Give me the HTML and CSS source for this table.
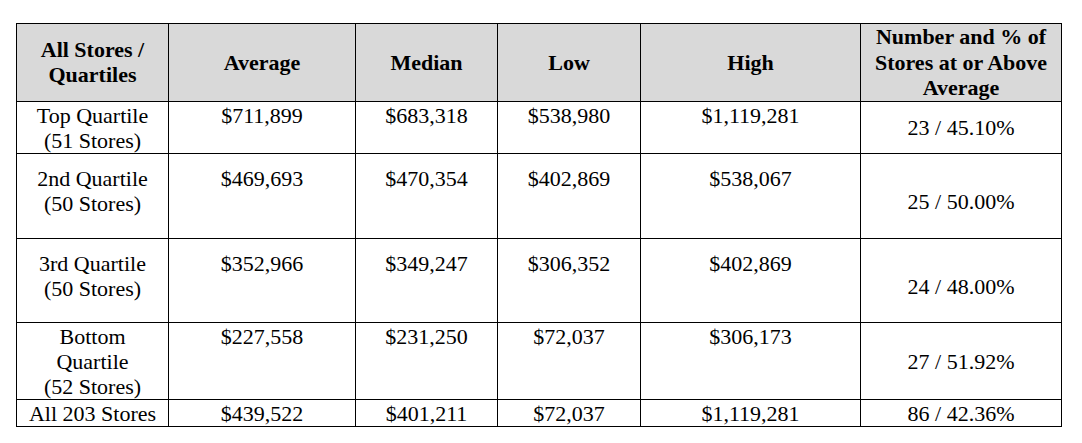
FILE: index.html
```html
<!DOCTYPE html>
<html>
<head>
<meta charset="utf-8">
<link rel="stylesheet" href="styles.css">
</head>
<body>
<table class="stats">
  <colgroup>
    <col class="c1"><col class="c2"><col class="c3"><col class="c4"><col class="c5"><col class="c6">
  </colgroup>
  <thead>
    <tr class="head">
      <th>All Stores /<br>Quartiles</th>
      <th>Average</th>
      <th>Median</th>
      <th>Low</th>
      <th>High</th>
      <th>Number and % of<br>Stores at or Above<br>Average</th>
    </tr>
  </thead>
  <tbody>
    <tr class="r1">
      <td>Top Quartile<br>(51 Stores)</td>
      <td>$711,899</td>
      <td>$683,318</td>
      <td>$538,980</td>
      <td>$1,119,281</td>
      <td class="mid">23 / 45.10%</td>
    </tr>
    <tr class="r2 spaced">
      <td>2nd Quartile<br>(50 Stores)</td>
      <td>$469,693</td>
      <td>$470,354</td>
      <td>$402,869</td>
      <td>$538,067</td>
      <td class="mid">25 / 50.00%</td>
    </tr>
    <tr class="r3 spaced">
      <td>3rd Quartile<br>(50 Stores)</td>
      <td>$352,966</td>
      <td>$349,247</td>
      <td>$306,352</td>
      <td>$402,869</td>
      <td class="mid">24 / 48.00%</td>
    </tr>
    <tr class="r4">
      <td>Bottom<br>Quartile<br>(52 Stores)</td>
      <td>$227,558</td>
      <td>$231,250</td>
      <td>$72,037</td>
      <td>$306,173</td>
      <td class="mid">27 / 51.92%</td>
    </tr>
    <tr class="r5">
      <td>All 203 Stores</td>
      <td>$439,522</td>
      <td>$401,211</td>
      <td>$72,037</td>
      <td>$1,119,281</td>
      <td class="mid">86 / 42.36%</td>
    </tr>
  </tbody>
</table>
</body>
</html>
```
FILE: styles.css
```css
html, body {
  margin: 0;
  padding: 0;
  background: #ffffff;
}

body {
  font-family: "Liberation Serif", serif;
  font-size: 22px;
  line-height: 25px;
  color: #000000;
}

.stats {
  margin: 23px 0 0 16px;
  border-collapse: collapse;
  table-layout: fixed;
  width: 1046px;
  font-family: "Liberation Serif", serif;
  font-size: 22px;
}

.c1 { width: 152px; }
.c2 { width: 187px; }
.c3 { width: 142px; }
.c4 { width: 143px; }
.c5 { width: 220px; }
.c6 { width: 201px; }

.stats th,
.stats td {
  border: 1px solid #000000;
  padding: 1px 3px 0;
  text-align: center;
  vertical-align: top;
  font-family: "Liberation Serif", serif;
}

.stats th {
  background: #d9d9d9;
  font-weight: bold;
  vertical-align: middle;
  line-height: 25.5px;
  padding: 0 3px;
}

.stats td.mid {
  vertical-align: middle;
}

.head { height: 77px; }
.r1 { height: 52px; }
.r2 { height: 85px; }
.r3 { height: 84px; }
.r4 { height: 77px; }
.r5 { height: 26px; }

.spaced td {
  padding-top: 12px;
}
```
